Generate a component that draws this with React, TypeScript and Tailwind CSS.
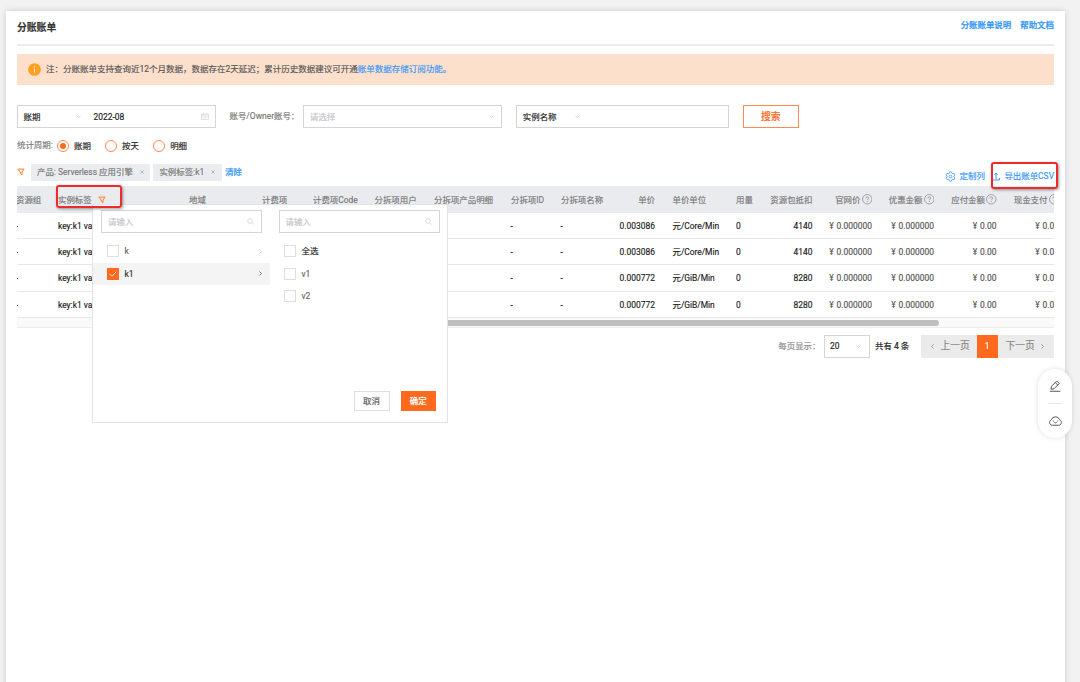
import React from "react";

const COLS =
  "grid grid-cols-[41px_131px_73px_51px_61.5px_59.5px_77px_50px_54px_40px_81px_34px_42.5px_59.5px_62px_62.5px_62.5px]";

function Chevron({ className = "" }: { className?: string }) {
  return (
    <svg className={`h-[3px] w-[5px] shrink-0 ${className}`} viewBox="0 0 10 6" fill="none" stroke="#c4c6cc" strokeWidth="1.5">
      <path d="M1 1l4 4 4-4" />
    </svg>
  );
}

function Arrow({ color, flip = false }: { color: string; flip?: boolean }) {
  return (
    <svg className="h-[5px] w-[3px] shrink-0" viewBox="0 0 6 10" fill="none" stroke={color} strokeWidth="2">
      <path d={flip ? "M5 1L1 5l4 4" : "M1 1l4 4-4 4"} />
    </svg>
  );
}

function Funnel() {
  return (
    <svg className="h-2 w-2 shrink-0" viewBox="0 0 16 16" fill="none" stroke="#ff7a33" strokeWidth="2">
      <path d="M1.8 2.2h12.4L10 8v5.5L6.5 11V8z" />
    </svg>
  );
}

function Help() {
  return (
    <svg className="ml-px h-[10.5px] w-[10.5px] shrink-0" viewBox="0 0 20 20" fill="none" stroke="#808080" strokeWidth="1.3">
      <circle cx="10" cy="10" r="9" />
      <path d="M7.3 8.2c0-1.6 1.2-2.7 2.7-2.7s2.7 1 2.7 2.4c0 1.8-2.7 2.1-2.7 4.2" />
      <path d="M10 13.4v1.8" />
    </svg>
  );
}

function Search() {
  return (
    <svg className="h-[7px] w-[7px]" viewBox="0 0 14 14" fill="none" stroke="#c8c9cc" strokeWidth="1.3">
      <circle cx="6" cy="6" r="4.7" />
      <path d="M9.5 9.5L13 13" />
    </svg>
  );
}

function Radio({ label, checked = false }: { label: string; checked?: boolean }) {
  return (
    <div className="flex items-center">
      <span className="flex h-[12px] w-[12px] items-center justify-center rounded-full border border-[#ff8a4d] bg-white">
        {checked && <span className="h-[6px] w-[6px] rounded-full bg-[#ff6a1f]" />}
      </span>
      <span className="ml-[5px] text-[#222]">{label}</span>
    </div>
  );
}

function Tag({ children }: { children: React.ReactNode }) {
  return (
    <div className="flex h-[17px] items-center bg-[#ebecf0] pl-[6px] pr-[6.5px] text-[#777]">
      <span>{children}</span>
      <svg className="ml-[7px] h-1 w-1" viewBox="0 0 8 8" stroke="#a0a0a0" strokeWidth="1.5">
        <path d="M1 1l6 6M7 1L1 7" />
      </svg>
    </div>
  );
}

function Check({ checked = false }: { checked?: boolean }) {
  return (
    <span
      className={
        checked
          ? "flex h-[12px] w-[12px] items-center justify-center bg-[#ff6a1f]"
          : "flex h-[12px] w-[12px] border border-[#dddee0] bg-white"
      }
    >
      {checked && (
        <svg className="h-[6px] w-[8px]" viewBox="0 0 16 12" fill="none" stroke="#fff" strokeWidth="1.6">
          <path d="M1.5 6l4.5 4.5L14.5 1.5" />
        </svg>
      )}
    </span>
  );
}

function Field() {
  return (
    <div className="flex h-[23px] w-[161px] items-center justify-between border border-[#d4d5db] bg-white pl-[6px] pr-[7px] text-[#c3c4c8]">
      <span>请输入</span>
      <Search />
    </div>
  );
}

function FilterPopover() {
  return (
    <div className="absolute left-[75px] top-[18px] z-10 flex h-[219px] w-[356px] flex-col border border-[#e2e3e8] bg-white">
      <div className="flex flex-1">
        <div className="w-[177px] pt-[5px]">
          <div className="pl-2">
            <Field />
          </div>
          <div className="mt-[7px] flex h-[22.5px] items-center justify-between pl-[14px] pr-2 text-[#666]">
            <span className="flex items-center gap-[5.5px]">
              <Check />k
            </span>
            <Arrow color="#d0d0d0" />
          </div>
          <div className="flex h-[22.5px] items-center justify-between bg-[#f4f4f4] pl-[14px] pr-2 text-[#333]">
            <span className="flex items-center gap-[5.5px]">
              <Check checked />
              k1
            </span>
            <Arrow color="#777" />
          </div>
        </div>
        <div className="flex-1 pt-[5px]">
          <div className="pl-[8.5px]">
            <Field />
          </div>
          <div className="mt-[7px] flex flex-col pl-[14px] text-[#666]">
            <div className="flex h-[22.5px] items-center gap-[5.5px] text-[#222]">
              <Check />
              全选
            </div>
            <div className="flex h-[22.5px] items-center gap-[5.5px]">
              <Check />
              v1
            </div>
            <div className="flex h-[22.5px] items-center gap-[5.5px]">
              <Check />
              v2
            </div>
          </div>
        </div>
      </div>
      <div className="flex justify-end gap-[11px] pb-[11px] pr-[11px]">
        <button className="h-[20px] w-[36px] border border-[#dddee0] bg-white text-[#555]">取消</button>
        <button className="h-[20px] w-[35.5px] bg-[#ff6a1f] font-medium text-white">确定</button>
      </div>
    </div>
  );
}

function Money({ value }: { value: string }) {
  return (
    <span className="text-right text-[#555]">
      <span className="mr-[0.7px]">¥</span> {value}
    </span>
  );
}

const leftHeads = ["地域", "计费项", "计费项Code", "分拆项用户", "分拆项产品明细", "分拆项ID", "分拆项名称"];
const amountHeads = ["官网价", "优惠金额", "应付金额"];
const rows = [
  { price: "0.003086", unit: "元/Core/Min", pack: "4140" },
  { price: "0.003086", unit: "元/Core/Min", pack: "4140" },
  { price: "0.000772", unit: "元/GiB/Min", pack: "8280" },
  { price: "0.000772", unit: "元/GiB/Min", pack: "8280" },
];

function BillTable() {
  return (
    <div className="overflow-hidden">
      <div className={`${COLS} h-[27px] items-center whitespace-nowrap bg-[#eaebef] text-[#777]`}>
        <span className="-ml-[1px]">资源组</span>
        <span className="flex items-center gap-[6.5px]">
          实例标签
          <Funnel />
        </span>
        {leftHeads.map((h) => (
          <span key={h}>{h}</span>
        ))}
        <span className="text-right">单价</span>
        <span className="pl-[17.5px]">单价单位</span>
        <span>用量</span>
        <span className="text-right">资源包抵扣</span>
        {amountHeads.map((h) => (
          <span key={h} className="flex items-center justify-end">
            {h}
            <Help />
          </span>
        ))}
        <span className="flex items-center justify-end">
          现金支付
          <Help />
        </span>
      </div>
      {rows.map((r, i) => (
        <div key={i} className={`${COLS} h-[26.2px] items-center whitespace-nowrap border-b border-[#e8e8ea] pt-px text-[#1c1c1c]`}>
          <span className="-ml-[1.5px]">-</span>
          <span>key:k1 va</span>
          <span />
          <span />
          <span />
          <span />
          <span />
          <span className="-ml-[0.5px]">-</span>
          <span className="-ml-[0.5px]">-</span>
          <span className="text-right">{r.price}</span>
          <span className="pl-[17.5px] tracking-[-0.05px]">{r.unit}</span>
          <span>0</span>
          <span className="text-right">{r.pack}</span>
          <Money value="0.000000" />
          <Money value="0.000000" />
          <Money value="0.00" />
          <Money value="0.00" />
        </div>
      ))}
      <div className="flex h-[10.5px] items-center border-b border-[#ececec] bg-[#fafafa]">
        <div className="ml-[300px] h-[6px] w-[622px] rounded-full bg-[#bfbfbf]" />
      </div>
    </div>
  );
}

export default function App() {
  return (
    <div className="flex h-[682px] w-[1080px] overflow-hidden bg-[#f2f2f2] pl-[6px] pt-[10.5px] font-[Roboto,'Noto_Sans_CJK_SC',sans-serif] text-[8.45px] leading-[12px] [-webkit-text-stroke:0.15px]">
      <main className="relative h-[690px] w-[1059px] bg-white pl-[11px] pr-[11px] shadow-[0_0_6px_rgba(0,0,0,0.16)]">
        <header className="flex h-[35.5px] justify-between border-b-2 border-[#ebebed]">
          <h1 className="pt-[11.5px] text-[9.8px] font-bold text-[#333]">分账账单</h1>
          <nav className="flex gap-[9px] pt-[8px] font-medium text-[#3296fa] [-webkit-text-stroke:0.25px]">
            <a>分账账单说明</a>
            <a>帮助文档</a>
          </nav>
        </header>

        <div className="mt-[8px] flex h-[31px] items-center bg-[#fde0cc] pl-[11px] text-[8.5px] text-[#555]">
          <svg className="h-[13px] w-[13px]" viewBox="0 0 26 26">
            <circle cx="13" cy="13" r="12.7" fill="#ffa024" />
            <path d="M13 6.2v2.6M13 11v8.5" stroke="#fde0cc" strokeWidth="2.2" />
          </svg>
          <span className="ml-[5px] -mt-px">
            注：分账账单支持查询近12个月数据，数据存在2天延迟；累计历史数据建议可开通
            <span className="text-[#3296fa]">账单数据存储订阅功能。</span>
          </span>
        </div>

        <div className="mt-[20px] flex h-[23px] items-center text-[#222]">
          <div className="flex h-full w-[199px] items-center border border-[#d4d5d9] pl-[5.5px] pr-[6px]">
            <span className="w-[52px]">账期</span>
            <Chevron />
            <span className="ml-[13px] flex-1">2022-08</span>
            <svg className="h-[7px] w-[8px]" viewBox="0 0 16 14" fill="none" stroke="#cfd0d4" strokeWidth="1.3">
              <path d="M1 2.5h14v10.5H1zM1 6h14M4.5 0v4M11.5 0v4M4 9.5h8" />
            </svg>
          </div>
          <span className="-mt-[2px] ml-[13.5px] w-[73.3px] whitespace-nowrap text-[#777]">账号/Owner账号：</span>
          <div className="flex h-full w-[199px] items-center justify-between border border-[#d4d5d9] pl-[6px] pr-[7px] text-[#c3c4c8]">
            <span>请选择</span>
            <Chevron />
          </div>
          <div className="ml-[14px] flex h-full w-[213px] items-center border border-[#d4d5d9] pl-[6px]">
            <span className="w-[52px]">实例名称</span>
            <Chevron />
          </div>
          <button className="ml-[14px] h-full w-[56px] border border-[#ff8a4d] text-[9.8px] font-medium text-[#ff6a1f]">搜索</button>
        </div>

        <div className="mt-[11.5px] flex h-[12px] items-center">
          <span className="-mt-px w-[40px] whitespace-nowrap text-[#777]">统计周期:</span>
          <div className="flex gap-[14.2px]">
            <Radio label="账期" checked />
            <Radio label="按天" />
            <Radio label="明细" />
          </div>
        </div>

        <div className="mt-[12px] flex h-[22.5px] items-start justify-between">
          <div className="flex items-center">
            <Funnel />
            <div className="ml-[6px] flex gap-[3px]">
              <Tag>产品: Serverless 应用引擎</Tag>
              <Tag>实例标签:k1</Tag>
            </div>
            <a className="ml-[3.5px] font-medium text-[#3296fa]">清除</a>
          </div>
          <div className="relative flex items-center pt-[6.5px] text-[#3296fa]">
            <svg className="h-[11px] w-[11px]" viewBox="0 0 24 24" fill="none" stroke="currentColor" strokeWidth="1.7">
              <path d="M10 2h4l.8 3 2 1.1 3-.9 2 3.5-2.2 2.1v2.4l2.2 2.1-2 3.5-3-.9-2 1.1-.8 3h-4l-.8-3-2-1.1-3 .9-2-3.5 2.2-2.1v-2.4L2.200 8.700l2-3.500 3 .9 2-1.100z" />
              <circle cx="12" cy="12" r="3" />
            </svg>
            <span className="ml-[3.5px]">定制列</span>
            <svg className="ml-[7.5px] h-[9px] w-[8px]" viewBox="0 0 16 18" fill="none" stroke="currentColor" strokeWidth="1.9">
              <path d="M8 14V2M4.500 5.500L8 2l3.500 3.500M1 12v4h14v-4" />
            </svg>
            <span className="ml-[4px]">导出账单CSV</span>
            <div className="absolute -right-[4px] -top-[2px] z-20 h-[27px] w-[67px] rounded-[3px] border-2 border-[#ee2b2b] shadow-[1px_1px_3px_rgba(0,0,0,0.4)]" />
          </div>
        </div>

        <div className="relative">
          <BillTable />
          <FilterPopover />
          <div className="absolute left-[39px] -top-[1.5px] z-20 h-[23px] w-[66px] rounded-[3px] border-2 border-[#ee2b2b] shadow-[1px_1px_3px_rgba(0,0,0,0.4)]" />
        </div>

        <div className="mt-[6.5px] flex h-[23px] items-center justify-end">
          <span className="text-[#888]">每页显示：</span>
          <div className="ml-[3.5px] flex h-full w-[45.5px] items-center justify-between border border-[#d4d5d9] pl-[5px] pr-[8px] text-[#222]">
            20
            <Chevron />
          </div>
          <span className="ml-[5.5px] w-[45.5px] whitespace-nowrap font-medium text-[#333]">共有 4 条</span>
          <div className="flex h-full text-[9.8px] text-[#888]">
            <div className="flex w-[56px] items-center gap-[6.5px] bg-[#ebebeb] pl-[10.5px]">
              <Arrow color="#999" flip />
              上一页
            </div>
            <div className="flex w-[21px] items-center justify-center bg-[#ff6a1f] text-[8.45px] text-white">1</div>
            <div className="flex w-[56.5px] items-center gap-[6.5px] bg-[#ebebeb] pl-[8px]">
              下一页
              <Arrow color="#999" />
            </div>
          </div>
        </div>

        <aside className="absolute left-[1032px] top-[358.5px] flex h-[69px] w-[34px] flex-col items-center justify-between rounded-full bg-white pb-[12.5px] pt-[10.5px] shadow-[0_0_5px_rgba(0,0,0,0.13)]">
          <svg className="h-[12px] w-[12px]" viewBox="0 0 24 24" fill="none" stroke="#555" strokeWidth="2">
            <path d="M1.500 22.500h21M4 18.500l1-6L15.500 2l5 5L10 17.500zM12.500 5l5 5" />
          </svg>
          <span className="h-px w-[14px] bg-[#e8e8e8]" />
          <svg className="h-[10px] w-[13px]" viewBox="0 0 26 20" fill="none" stroke="#555" strokeWidth="2">
            <path d="M7 18.500C3.500 18.500 1.200 16 1.200 13c0-2.600 1.300-4.600 3.600-5.600C6 4 9 1.800 13 1.800s7 2.200 8.200 5.600c2.300 1 3.600 3 3.600 5.600 0 3-2.300 5.500-5.800 5.500z" />
            <path d="M8.500 9v2M17.500 9v2M10.500 12.500c1.300 1.500 3.700 1.500 5 0" />
          </svg>
        </aside>
      </main>
    </div>
  );
}
